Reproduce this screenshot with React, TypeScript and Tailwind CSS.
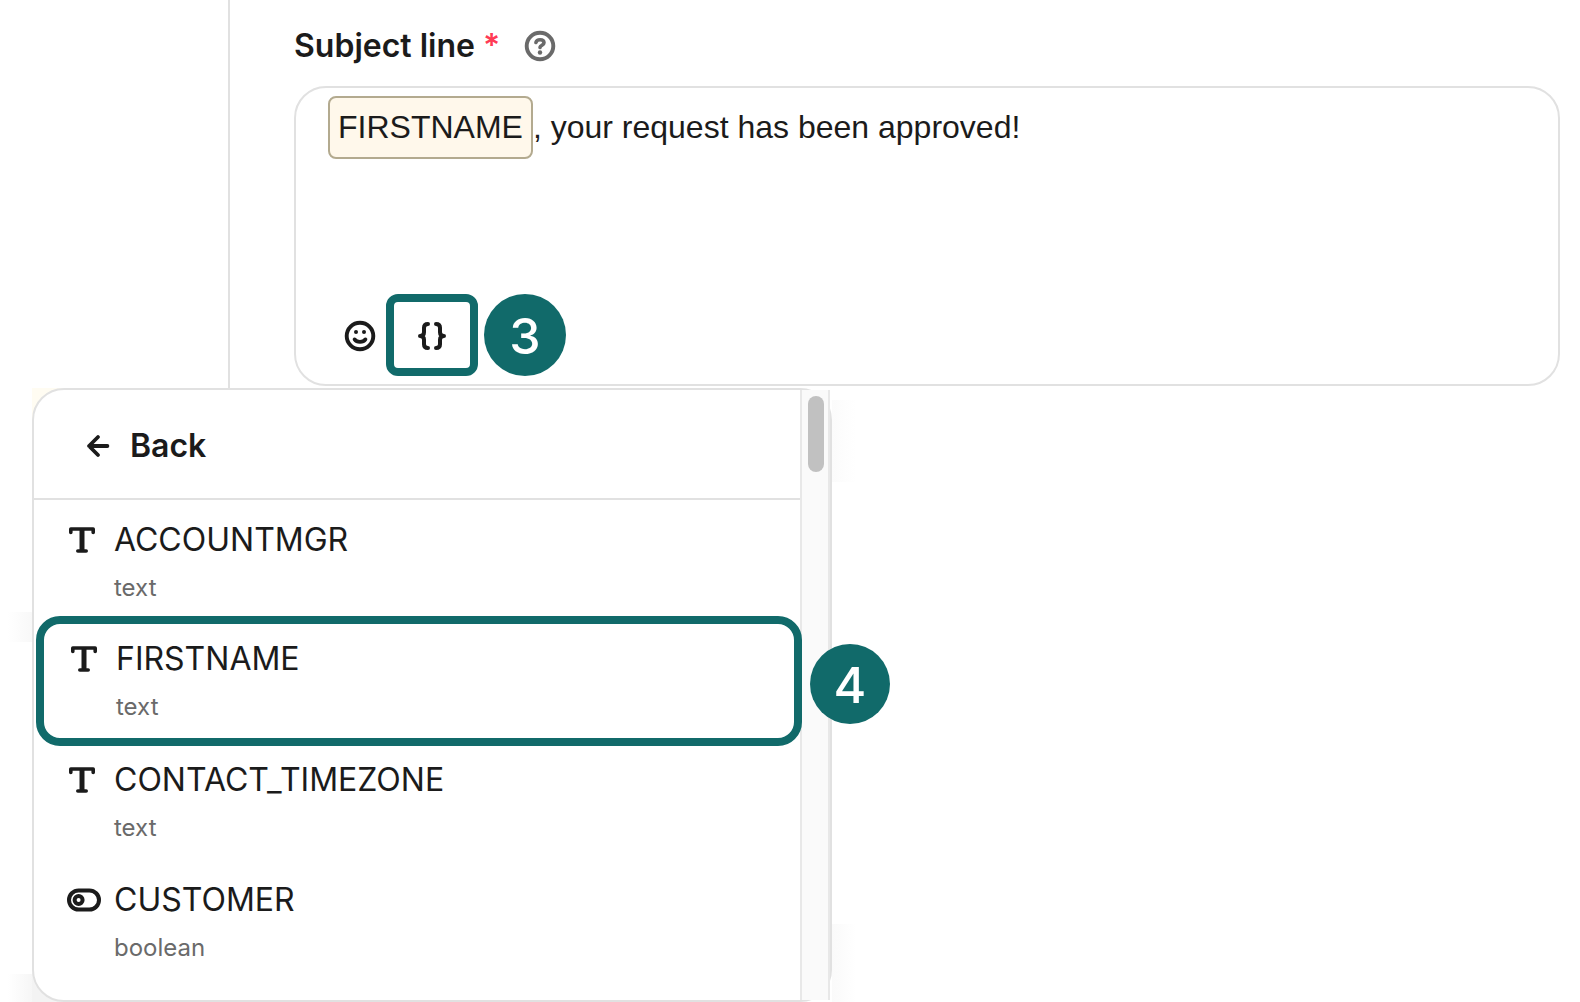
import {useState} from 'react'

interface Attribute {
    name: string
    type: 'text' | 'boolean'
}

const attributes: Attribute[] = [
    {name: 'ACCOUNTMGR', type: 'text'},
    {name: 'FIRSTNAME', type: 'text'},
    {name: 'CONTACT_TIMEZONE', type: 'text'},
    {name: 'CUSTOMER', type: 'boolean'},
]

const SELECTED = 'FIRSTNAME'

function HelpIcon() {
    return (
        <svg className="size-8" viewBox="0 0 32 32" fill="none" stroke="currentColor" strokeLinecap="round">
            <circle cx="16" cy="16" r="13.3" strokeWidth="3.9"/>
            <path d="M11.9 12.4c.5-1.7 2-2.7 4.1-2.7 2.4 0 4 1.2 4 3.1 0 2.4-3.6 2.4-4 4.6" strokeWidth="3.6"/>
            <circle cx="16" cy="22.5" r="2.2" fill="currentColor" stroke="none"/>
        </svg>
    )
}

function SmileIcon() {
    return (
        <svg className="size-8" viewBox="0 0 32 32" fill="none" stroke="currentColor" strokeLinecap="round">
            <circle cx="16" cy="16" r="13.3" strokeWidth="3.9"/>
            <circle cx="12" cy="12" r="2" fill="currentColor" stroke="none"/>
            <circle cx="20" cy="12" r="2" fill="currentColor" stroke="none"/>
            <path d="M10.6 19.4c1.1 1.6 3.1 2.5 5.4 2.5s4.3-.9 5.4-2.5" strokeWidth="3.8"/>
        </svg>
    )
}

function BracesIcon() {
    return (
        <svg
            className="size-8"
            viewBox="0 0 32 32"
            fill="none"
            stroke="currentColor"
            strokeWidth="4"
            strokeLinecap="round"
            strokeLinejoin="round"
        >
            <path d="M12 4c-2.6 0-4 1.3-4 3.8v4.4c0 2-1 3.8-4 3.8 3 0 4 1.8 4 3.8v4.4C8 26.7 9.4 28 12 28"/>
            <path d="M20 4c2.6 0 4 1.3 4 3.8v4.4c0 2 1 3.8 4 3.8-3 0-4 1.8-4 3.8v4.4c0 2.5-1.4 3.8-4 3.8"/>
        </svg>
    )
}

function ArrowIcon() {
    return (
        <svg
            className="size-6"
            viewBox="0 0 24 24"
            fill="none"
            stroke="currentColor"
            strokeWidth="3.8"
            strokeLinecap="round"
            strokeLinejoin="round"
        >
            <path d="M21.4 12H3.2M12 3 3 12l9 9"/>
        </svg>
    )
}

function TextIcon() {
    return (
        <svg className="h-8 w-9" viewBox="0 0 36 32" fill="none" stroke="currentColor" strokeLinecap="round" strokeLinejoin="round">
            <path d="M4.8 8.4V5h22.4v3.4" strokeWidth="3.6"/>
            <path d="M16 5v21" strokeWidth="5" strokeLinecap="butt"/>
            <path d="M11.8 27h8.4" strokeWidth="3.6"/>
        </svg>
    )
}

function ToggleIcon() {
    return (
        <svg className="h-8 w-9" viewBox="0 0 36 32" fill="none" stroke="currentColor">
            <rect x="3" y="6.4" width="30" height="19.2" rx="9.6" strokeWidth="4"/>
            <circle cx="12.6" cy="16" r="4" strokeWidth="4"/>
        </svg>
    )
}

function AttributeItem({attribute, onSelect}: {attribute: Attribute; onSelect: (name: string) => void}) {
    const selected = attribute.name === SELECTED
    return (
        <li className="relative">
            <button
                type="button"
                onClick={() => onSelect(attribute.name)}
                className={`flex h-30 w-full gap-3 text-left ${selected ? 'pt-[15px] pl-[34px]' : 'pt-4 pl-8'}`}
            >
                <span className="flex h-12 items-center">
                    {attribute.type === 'boolean' ? <ToggleIcon/> : <TextIcon/>}
                </span>
                <span className="flex flex-col">
                    <span className="text-[32px] leading-12">{attribute.name}</span>
                    <span className="text-2xl leading-12 text-[#6a6a6a]">{attribute.type}</span>
                </span>
            </button>
            {selected && (
                <>
                    <div className="pointer-events-none absolute -top-1 -right-0.5 -bottom-1.5 left-0.5 rounded-3xl border-8 border-[#116a6a]"/>
                    <Step className="absolute top-6 left-full ml-2.5 size-20">4</Step>
                </>
            )}
        </li>
    )
}

function Step({className, children}: {className: string; children: string}) {
    return (
        <span className={`z-10 flex items-center justify-center rounded-full bg-[#116a6a] pt-0.5 text-[50px] font-medium text-white ${className}`}>
            {children}
        </span>
    )
}

export default function App() {
    const [variable, setVariable] = useState(SELECTED)
    const [subject, setSubject] = useState(', your request has been approved!')

    return (
        <div className="min-h-screen bg-white font-[Inter,sans-serif] text-[#1b1b1b]">
            <div className="flex">
                <aside className="w-[230px] shrink-0 border-r-2 border-[#e1e1e1]"/>
                <main className="flex-1 pt-5 pr-5 pb-0.5 pl-16">
                    <div className="flex h-[52px] items-center gap-6">
                        <label htmlFor="subject" className="text-[32px] font-semibold">
                            Subject line <span className="text-[#ff3b55]">*</span>
                        </label>
                        <button type="button" aria-label="Help" className="text-[#6a6a6a]">
                            <HelpIcon/>
                        </button>
                    </div>
                    <div className="mt-3.5 flex h-75 flex-col justify-between rounded-[32px] border-2 border-[#e1e1e1] px-8 pt-2 pb-2">
                        <div className="flex items-center font-['Liberation_Sans',Arial,sans-serif] text-[32px]">
                            <span className="flex h-[63px] items-center rounded-lg border-2 border-[#b3aa8f] bg-[#fff8eb] px-2 pb-0.5">
                                {variable}
                            </span>
                            <input
                                id="subject"
                                value={subject}
                                onChange={(e) => setSubject(e.target.value)}
                                className="h-[63px] min-w-0 flex-1 outline-none"
                            />
                        </div>
                        <div className="flex items-center pl-4">
                            <button type="button" aria-label="Insert emoji" className="pt-0.5">
                                <SmileIcon/>
                            </button>
                            <button
                                type="button"
                                aria-label="Insert variable"
                                className="ml-2.5 flex h-[82px] w-[92px] items-center justify-center rounded-xl border-8 border-[#116a6a] pt-0.5"
                            >
                                <BracesIcon/>
                            </button>
                            <Step className="ml-1.5 size-[82px]">3</Step>
                        </div>
                    </div>
                </main>
            </div>

            <div className="relative ml-8 w-200 max-w-full">
                <div className="absolute top-0 left-0 size-8 bg-[#fffcf2]"/>
                <div className="absolute top-3 left-full h-[82px] w-6 bg-linear-to-r from-[#fbfbfb] to-white"/>
                <div className="absolute top-56 right-full h-[30px] w-6 bg-linear-to-l from-[#f8f8f8] to-white"/>
                <div className="absolute right-full bottom-0 h-7 w-6 bg-linear-to-l from-[#f6f6f6] to-white"/>
                <div className="absolute bottom-0 left-0 size-8 bg-[#f3f3f3]"/>
                <div className="absolute bottom-0 left-full h-[78px] w-6 bg-linear-to-r from-[#fafafa] to-white"/>
                <div className="relative flex rounded-[32px] border-2 border-[#e1e1e1] bg-white">
                    <div className="flex-1 pb-5">
                        <button
                            type="button"
                            className="flex h-[110px] w-full items-center gap-5 border-b-2 border-[#e1e1e1] pt-1 pl-[52px] text-[32px] font-semibold"
                        >
                            <ArrowIcon/>
                            Back
                        </button>
                        <ul>
                            {attributes.map((attribute) => (
                                <AttributeItem key={attribute.name} attribute={attribute} onSelect={setVariable}/>
                            ))}
                        </ul>
                    </div>
                    <div className="w-[30px] border-x-2 border-[#e8e8e8] bg-[#fafafa] px-1.5 py-1.5">
                        <div className="h-19 w-4 rounded-full bg-[#c1c1c1]"/>
                    </div>
                </div>
            </div>
        </div>
    )
}
